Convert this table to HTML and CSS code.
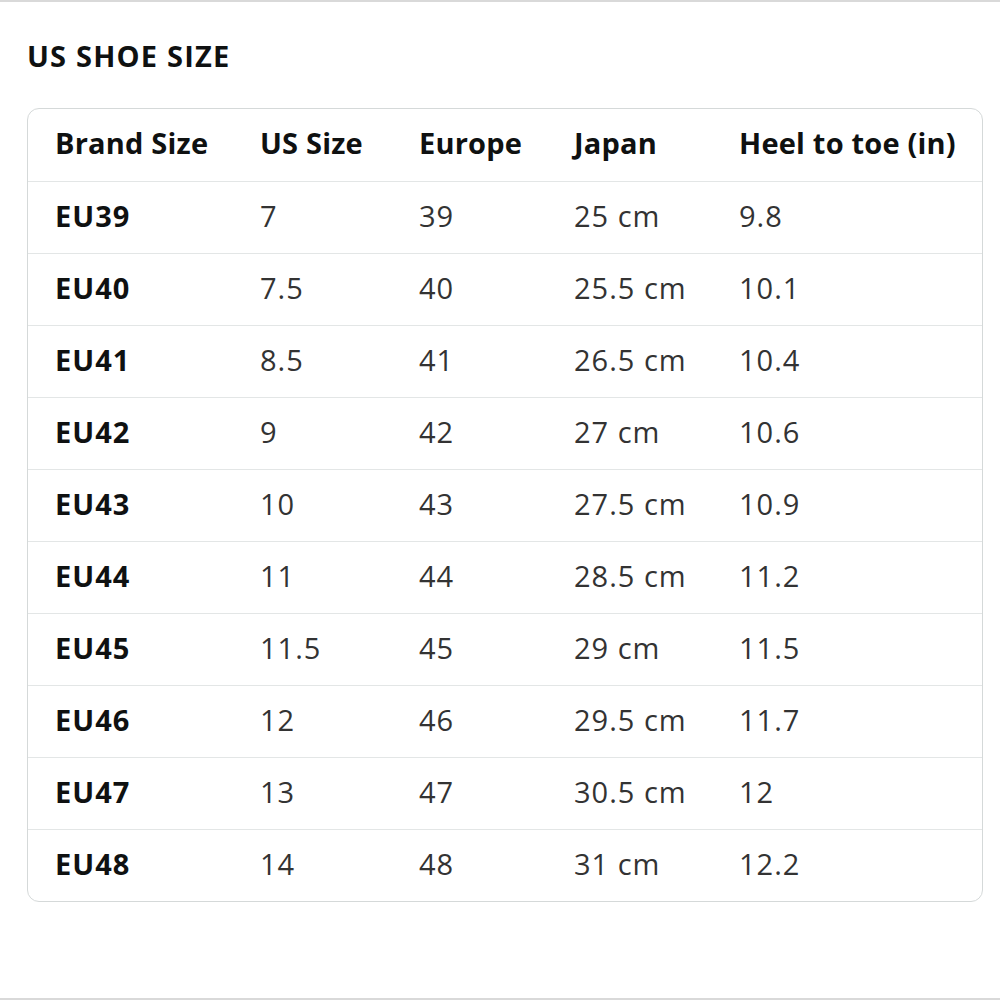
FILE: index.html
```html
<!DOCTYPE html>
<html>
<head>
<meta charset="utf-8">
<link rel="stylesheet" href="styles.css">
</head>
<body>
<div class="page">
  <h2 class="title">US SHOE SIZE</h2>
  <div class="card">
    <table class="sizes">
      <colgroup>
        <col class="c1"><col class="c2"><col class="c3"><col class="c4"><col class="c5">
      </colgroup>
      <thead>
        <tr><th>Brand Size</th><th>US Size</th><th>Europe</th><th>Japan</th><th>Heel to toe (in)</th></tr>
      </thead>
      <tbody>
        <tr><td class="b">EU39</td><td>7</td><td>39</td><td>25 cm</td><td>9.8</td></tr>
        <tr><td class="b">EU40</td><td>7.5</td><td>40</td><td>25.5 cm</td><td>10.1</td></tr>
        <tr><td class="b">EU41</td><td>8.5</td><td>41</td><td>26.5 cm</td><td>10.4</td></tr>
        <tr><td class="b">EU42</td><td>9</td><td>42</td><td>27 cm</td><td>10.6</td></tr>
        <tr><td class="b">EU43</td><td>10</td><td>43</td><td>27.5 cm</td><td>10.9</td></tr>
        <tr><td class="b">EU44</td><td>11</td><td>44</td><td>28.5 cm</td><td>11.2</td></tr>
        <tr><td class="b">EU45</td><td>11.5</td><td>45</td><td>29 cm</td><td>11.5</td></tr>
        <tr><td class="b">EU46</td><td>12</td><td>46</td><td>29.5 cm</td><td>11.7</td></tr>
        <tr><td class="b">EU47</td><td>13</td><td>47</td><td>30.5 cm</td><td>12</td></tr>
        <tr><td class="b">EU48</td><td>14</td><td>48</td><td>31 cm</td><td>12.2</td></tr>
      </tbody>
    </table>
  </div>
</div>
</body>
</html>
```

FILE: styles.css
```css
html, body {
  margin: 0;
  padding: 0;
  background: #fff;
}
.page {
  box-sizing: border-box;
  height: 1000px;
  border-top: 2px solid #d9d9d9;
  border-bottom: 2px solid #d9d9d9;
  padding: 0 17px 0 27px;
  font-family: "Open Sans", "Noto Sans", sans-serif;
  color: #333;
}
.title {
  margin: 0 0 32px 0;
  padding-top: 34px;
  font-size: 29px;
  line-height: 40px;
  font-weight: 700;
  color: #0f1111;
  letter-spacing: 1.2px;
}
.card {
  border: 1px solid #d5d9d9;
  border-radius: 12px;
  overflow: hidden;
}
.sizes {
  width: 100%;
  border-collapse: collapse;
  table-layout: fixed;
}
.c1 { width: 205px; }
.c2 { width: 159px; }
.c3 { width: 155px; }
.c4 { width: 165px; }
.c5 { width: auto; }
.sizes th, .sizes td {
  text-align: left;
  padding: 0 0 4px 27px;
  height: 67px;
  font-size: 29px;
  line-height: 36px;
  white-space: nowrap;
  vertical-align: middle;
}
.sizes th {
  font-weight: 700;
  color: #0f1111;
  letter-spacing: 0.2px;
  height: 68px;
}
.sizes tbody tr td {
  border-top: 1px solid #e3e6e6;
}
.sizes td {
  color: #333;
  font-weight: 400;
  letter-spacing: 1px;
}
.sizes td.b {
  font-weight: 700;
  color: #0f1111;
}
```
